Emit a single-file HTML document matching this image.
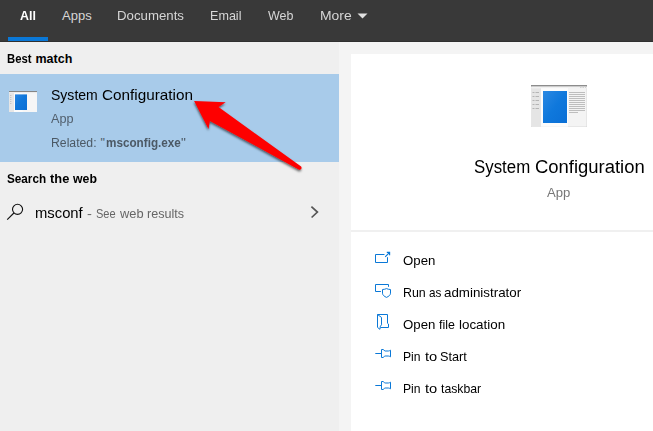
<!DOCTYPE html>
<html><head><meta charset="utf-8">
<style>
html,body{margin:0;padding:0;}
body{width:653px;height:431px;overflow:hidden;background:#f4f4f4;font-family:"Liberation Sans",sans-serif;position:relative;}
.abs{position:absolute;white-space:nowrap;line-height:1;}
#top{left:0;top:0;width:653px;height:42px;background:#393939;box-shadow:inset 0 -1px 0 #303030;}
#left{left:0;top:42px;width:339px;height:389px;background:#efefef;}
#sel{left:0;top:74px;width:339px;height:88px;background:#a8cbea;}
#right{left:351px;top:54px;width:302px;height:377px;background:#fff;}
#sep{left:351px;top:230px;width:302px;height:2px;background:#f0f0f0;}
.tab{color:#d6d6d6;font-size:13.5px;top:9px;}
.t{color:#111;}
</style></head><body>
<div id="top" class="abs"></div>
<div class="abs" style="left:8px;top:37px;width:40px;height:4px;background:#0a78d7"></div>
<svg class="abs" style="left:357px;top:12.7px" width="12" height="8"><path d="M0.5 0.5 L10.5 0.5 L5.5 5.5 Z" fill="#e0e0e0"/></svg>

<div id="left" class="abs"></div>
<div id="sel" class="abs"></div>

<!-- small icon -->
<svg class="abs" style="left:9px;top:91px" width="28" height="21" viewBox="0 0 28 21">
<defs><linearGradient id="g0" x1="0" y1="0" x2="1" y2="1"><stop offset="0" stop-color="#2a86e1"/><stop offset="0.45" stop-color="#0f77db"/><stop offset="1" stop-color="#0a6ed5"/></linearGradient></defs>
<rect x="0" y="0" width="28" height="21" fill="#f6f6f6"/>
<rect x="0" y="0" width="28" height="1.1" fill="#858585"/>
<rect x="0" y="1.1" width="28" height="1" fill="#ededed"/>
<rect x="0" y="2" width="5" height="19" fill="#e6e6e6"/>
<rect x="5" y="2" width="8.5" height="19" fill="#fbfbfb"/>
<g fill="#c2c2c2"><rect x="1" y="4" width="1.4" height="0.9"/><rect x="1" y="6" width="1.4" height="0.9"/><rect x="1" y="8" width="1.4" height="0.9"/><rect x="1" y="10" width="1.4" height="0.9"/><rect x="1" y="12" width="1.4" height="0.9"/></g>
<rect x="6" y="3.4" width="12" height="15.6" fill="url(#g0)"/>
</svg>

<svg class="abs" style="left:5px;top:200px" width="22" height="22" viewBox="0 0 22 22"><circle cx="12.55" cy="9.35" r="5.05" fill="none" stroke="#111" stroke-width="1.1"/><path d="M8.9 13 L2.2 19.7" stroke="#111" stroke-width="1.1" fill="none"/></svg>
<svg class="abs" style="left:306px;top:202px" width="16" height="20" viewBox="0 0 16 20"><path d="M5.4 4.6 L11.4 10.1 L5.6 15.5" fill="none" stroke="#555" stroke-width="1.7"/></svg>

<div id="right" class="abs"></div>
<div id="sep" class="abs"></div>

<!-- big icon -->
<svg class="abs" style="left:531px;top:85px" width="56" height="42" viewBox="0 0 56 42">
<defs><linearGradient id="g" x1="0" y1="0" x2="1" y2="1"><stop offset="0" stop-color="#2b88e2"/><stop offset="0.5" stop-color="#0f78dc"/><stop offset="1" stop-color="#0a6fd6"/></linearGradient></defs>
<rect x="0" y="0" width="56" height="42" fill="#f4f4f4" stroke="#c8c8c8" stroke-width="0.6"/>
<rect x="0" y="0" width="56" height="1.6" fill="#8c8c8c"/>
<rect x="0.3" y="1.6" width="55.4" height="1.7" fill="#f1f1f1"/>
<rect x="0.3" y="3.3" width="9.7" height="38.4" fill="#e5e5e5"/>
<rect x="10" y="3.3" width="27" height="38.4" fill="#fcfcfc"/>
<path d="M49 2.5h1.5M51.5 2.5h1.5M54 2.5h1" stroke="#bdbdbd" stroke-width="0.6"/>
<g stroke="#a8a8a8" stroke-width="0.8">
<path d="M1.5 7.5h2M4.5 7.5h3.5M1.5 11.5h2M4.5 11.5h3.5M1.5 15.5h2M4.5 15.5h3.5M1.5 19.5h2M4.5 19.5h3.5M1.5 23.5h2M4.5 23.5h3.5"/>
</g>
<rect x="12" y="6" width="24" height="32" fill="url(#g)"/>
<g stroke="#b0b0b0" stroke-width="0.8">
<path d="M38 7.5h16M38 9.5h16M38 11.5h16M38 13.5h16M38 15.5h16M38 17.5h16M38 19.5h16M38 21.5h16M38 23.5h16M38 25.5h16M38 27.5h9"/>
</g>
</svg>

<!-- actions -->

<svg class="abs" style="left:370px;top:245px" width="26" height="26" viewBox="0 0 26 26" fill="none" stroke="#0a78d7" stroke-width="1">
<path d="M14.5 9.5 H5.5 V17.5 H17.5 V12.2"/><path d="M15.2 11.8 L19.4 7.6 M16.8 7.4 H19.6 V10.2" stroke-width="1.15"/></svg>
<svg class="abs" style="left:370px;top:277px" width="26" height="26" viewBox="0 0 26 26" fill="none" stroke="#0a78d7" stroke-width="1">
<path d="M10.9 14.5 H5.5 V7.5 H18.5 V9.8"/><path d="M16.5 11.6 C15.2 12.2 13.8 12.5 12.5 12.5 V16.2 C12.5 18 14.2 19.4 16.5 20.4 C18.8 19.4 20.5 18 20.5 16.2 V12.5 C19.2 12.5 17.8 12.2 16.5 11.6 Z"/></svg>
<svg class="abs" style="left:370px;top:307px" width="26" height="26" viewBox="0 0 26 26" fill="none" stroke="#0a78d7" stroke-width="1" stroke-linejoin="round">
<path d="M7.5 7.5 H17.5 V16.3 L18.5 17 V20.5 H10.6"/><path d="M7.5 7.5 V20.4 L9.9 22.3 L10.4 19.2 L11.5 17.8 V10.4 Z"/></svg>
<svg class="abs pin" style="left:370px;top:340px" width="26" height="26" viewBox="0 0 26 26" fill="none" stroke="#0a78d7" stroke-width="1">
<path d="M5.3 13.5 H11.5"/><path d="M11.5 9.5 H13.2 C14.1 9.7 14 11 15.1 11 H18.4 C19.5 11 19.8 10.4 20.5 10.2 V16.8 C19.8 16.6 19.5 16 18.4 16 H15.1 C14 16 14.1 17.3 13.2 17.5 H11.5 Z"/></svg>
<svg class="abs pin" style="left:370px;top:372px" width="26" height="26" viewBox="0 0 26 26" fill="none" stroke="#0a78d7" stroke-width="1">
<path d="M5.3 13.5 H11.5"/><path d="M11.5 9.5 H13.2 C14.1 9.7 14 11 15.1 11 H18.4 C19.5 11 19.8 10.4 20.5 10.2 V16.8 C19.8 16.6 19.5 16 18.4 16 H15.1 C14 16 14.1 17.3 13.2 17.5 H11.5 Z"/></svg>

<!-- text -->
<div class="abs" style="left:20.2px;top:10px;font-size:12.5px;font-weight:bold;color:#fff;transform:scaleX(0.993);transform-origin:0 0;">All</div>
<div class="abs" style="left:62.0px;top:9px;font-size:13px;color:#d6d6d6;">Apps</div>
<div class="abs" style="left:117.1px;top:9px;font-size:13px;color:#d6d6d6;transform:scaleX(1.019);transform-origin:0 0;">Documents</div>
<div class="abs" style="left:210.0px;top:9px;font-size:13px;color:#d6d6d6;transform:scaleX(0.968);transform-origin:0 0;">Email</div>
<div class="abs" style="left:268.1px;top:9px;font-size:13px;color:#d6d6d6;transform:scaleX(0.958);transform-origin:0 0;">Web</div>
<div class="abs" style="left:319.8px;top:9px;font-size:13px;color:#d6d6d6;transform:scaleX(1.068);transform-origin:0 0;">More</div>
<div class="abs" style="left:6.8px;top:52.9px;font-size:12.5px;font-weight:bold;color:#000;transform:scaleX(0.904);transform-origin:0 0;">Best</div>
<div class="abs" style="left:35.5px;top:52.9px;font-size:12.5px;font-weight:bold;color:#000;">match</div>
<div class="abs" style="left:51.0px;top:86.8px;font-size:15px;color:#000;transform:scaleX(0.935);transform-origin:0 0;">System</div>
<div class="abs" style="left:102.1px;top:86.8px;font-size:15px;color:#000;transform:scaleX(1.02);transform-origin:0 0;">Configuration</div>
<div class="abs" style="left:51.3px;top:112px;font-size:13px;color:#52606e;transform:scaleX(0.974);transform-origin:0 0;">App</div>
<div class="abs" style="left:50.6px;top:136.8px;font-size:12.5px;color:#4c5965;transform:scaleX(0.978);transform-origin:0 0;">Related:</div>
<div class="abs" style="left:100.5px;top:136.8px;font-size:12.5px;color:#4c5965;">&quot;</div>
<div class="abs" style="left:105.5px;top:136.8px;font-size:12.5px;font-weight:bold;color:#4c5965;transform:scaleX(0.937);transform-origin:0 0;">msconfig.exe</div>
<div class="abs" style="left:181.3px;top:136.8px;font-size:12.5px;color:#4c5965;transform:scaleX(1.1);transform-origin:0 0;">&quot;</div>
<div class="abs" style="left:6.9px;top:173px;font-size:12.5px;font-weight:bold;color:#000;transform:scaleX(0.938);transform-origin:0 0;">Search</div>
<div class="abs" style="left:50.4px;top:173px;font-size:12.5px;font-weight:bold;color:#000;transform:scaleX(1.028);transform-origin:0 0;">the</div>
<div class="abs" style="left:73.1px;top:173px;font-size:12.5px;font-weight:bold;color:#000;transform:scaleX(0.983);transform-origin:0 0;">web</div>
<div class="abs" style="left:34.7px;top:205px;font-size:15px;color:#000;transform:scaleX(0.987);transform-origin:0 0;">msconf</div>
<div class="abs" style="left:86.5px;top:207px;font-size:13px;color:#666;transform:scaleX(1.133);transform-origin:0 0;">-</div>
<div class="abs" style="left:95.5px;top:207px;font-size:13px;color:#666;transform:scaleX(0.85);transform-origin:0 0;">See</div>
<div class="abs" style="left:120.1px;top:207px;font-size:13px;color:#666;transform:scaleX(0.987);transform-origin:0 0;">web</div>
<div class="abs" style="left:146.9px;top:207px;font-size:13px;color:#666;transform:scaleX(0.968);transform-origin:0 0;">results</div>
<div class="abs" style="left:473.5px;top:158px;font-size:18px;color:#000;transform:scaleX(0.936);transform-origin:0 0;">System</div>
<div class="abs" style="left:534.6px;top:158px;font-size:18px;color:#000;transform:scaleX(1.025);transform-origin:0 0;">Configuration</div>
<div class="abs" style="left:547.1px;top:186.3px;font-size:13px;color:#777;transform:scaleX(1.009);transform-origin:0 0;">App</div>
<div class="abs" style="left:402.6px;top:254.4px;font-size:13px;color:#000;transform:scaleX(1.017);transform-origin:0 0;">Open</div>
<div class="abs" style="left:402.9px;top:286px;font-size:13px;color:#000;transform:scaleX(0.955);transform-origin:0 0;">Run</div>
<div class="abs" style="left:428.5px;top:286px;font-size:13px;color:#000;transform:scaleX(0.9);transform-origin:0 0;">as</div>
<div class="abs" style="left:443.9px;top:286px;font-size:13px;color:#000;transform:scaleX(1.027);transform-origin:0 0;">administrator</div>
<div class="abs" style="left:402.6px;top:317.8px;font-size:13px;color:#000;transform:scaleX(1.017);transform-origin:0 0;">Open</div>
<div class="abs" style="left:439.0px;top:317.8px;font-size:13px;color:#000;transform:scaleX(0.956);transform-origin:0 0;">file</div>
<div class="abs" style="left:458.6px;top:317.8px;font-size:13px;color:#000;transform:scaleX(1.03);transform-origin:0 0;">location</div>
<div class="abs" style="left:403.0px;top:350.2px;font-size:13px;color:#000;transform:scaleX(0.935);transform-origin:0 0;">Pin</div>
<div class="abs" style="left:425.0px;top:350.2px;font-size:13px;color:#000;transform:scaleX(1.13);transform-origin:0 0;">to</div>
<div class="abs" style="left:439.6px;top:350.2px;font-size:13px;color:#000;transform:scaleX(0.977);transform-origin:0 0;">Start</div>
<div class="abs" style="left:403.0px;top:381.9px;font-size:13px;color:#000;transform:scaleX(0.935);transform-origin:0 0;">Pin</div>
<div class="abs" style="left:425.0px;top:381.9px;font-size:13px;color:#000;transform:scaleX(1.13);transform-origin:0 0;">to</div>
<div class="abs" style="left:440.6px;top:381.9px;font-size:13px;color:#000;transform:scaleX(0.942);transform-origin:0 0;">taskbar</div>

<!-- red arrow -->
<svg id="arrow" class="abs" style="left:0;top:0" width="653" height="431" viewBox="0 0 653 431">
<defs><filter id="sh" x="-10%" y="-10%" width="130%" height="130%"><feDropShadow dx="-0.3" dy="1.6" stdDeviation="0.9" flood-color="#000" flood-opacity="0.6"/></filter></defs>
<path d="M194.1 101.1 L225.7 102.3 L218.5 107.0 L301.1 166.6 Q302.3 168.4 300.6 169.6 Q299.6 169.9 298.6 169.4 L209.9 120.9 L208.5 128.9 Z" fill="#fe0000" filter="url(#sh)"/>
</svg>
</body></html>
